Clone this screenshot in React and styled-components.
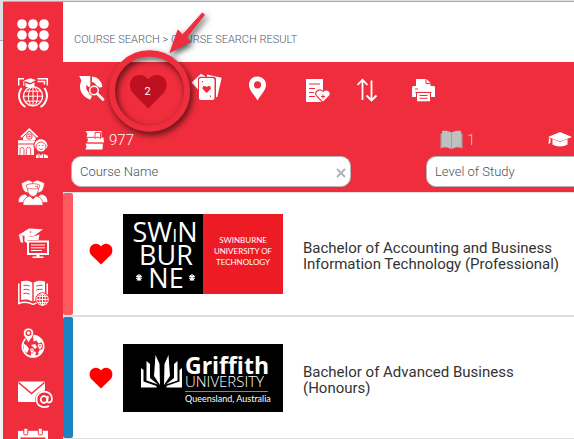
import styled, { createGlobalStyle } from "styled-components";

const RED = "#ef2d3c";

const menuItems = [
  { label: "Universities", icon: GlobeCapIcon },
  { label: "Campus", icon: SchoolIcon },
  { label: "Students", icon: GroupIcon },
  { label: "E-learning", icon: MonitorCapIcon },
  { label: "Course search", icon: BookGlobeIcon },
  { label: "Locations", icon: PinGlobeIcon },
  { label: "Mail", icon: MailIcon },
  { label: "Calendar", icon: CalendarIcon },
];

const courses = [
  {
    name: "Bachelor of Accounting and Business Information Technology (Professional)",
    color: "#ff5a5f",
    logo: SwinburneLogo,
  },
  {
    name: "Bachelor of Advanced Business (Honours)",
    color: "#1b82c4",
    logo: GriffithLogo,
  },
];

const App = () => {
  return (
    <>
      <GlobalStyle />
      <Page>
        <SideBar>
          <MenuToggle aria-label="Menu">
            <DotsIcon />
          </MenuToggle>
          {menuItems.map(({ label, icon: Icon }) => (
            <MenuButton key={label} aria-label={label}>
              <Icon />
            </MenuButton>
          ))}
        </SideBar>
        <Main>
          <Header>COURSE SEARCH &gt; COURSE SEARCH RESULT</Header>
          <SearchPanel>
            <ToolBar>
              <ToolButton aria-label="Search again">
                <SearchAgainIcon />
              </ToolButton>
              <ToolButton aria-label="Favourites">
                <BigHeartIcon />
                <Count>2</Count>
                <Pointer />
              </ToolButton>
              <ToolButton aria-label="Cards">
                <CardsIcon />
              </ToolButton>
              <ToolButton aria-label="Map">
                <PinIcon />
              </ToolButton>
              <ToolButton aria-label="Report">
                <ReportIcon />
              </ToolButton>
              <ToolButton aria-label="Sort">
                <SortIcon />
              </ToolButton>
              <ToolButton aria-label="Print">
                <PrintIcon />
              </ToolButton>
            </ToolBar>
            <Filters>
              <Filter>
                <Stats>
                  <Stat>
                    <BooksIcon />
                    977
                  </Stat>
                </Stats>
                <Field>
                  <Input aria-label="Course Name" placeholder="Course Name" />
                  <ClearButton aria-label="Clear">
                    <svg width="10" height="10" viewBox="0 0 10 10">
                      <path d="M1 1l8 8M9 1L1 9" stroke="#b3b3b3" strokeWidth="2" />
                    </svg>
                  </ClearButton>
                </Field>
              </Filter>
              <Filter>
                <Stats>
                  <Stat $muted>
                    <OpenBookIcon />1
                  </Stat>
                  <Stat>
                    <CapIcon />
                  </Stat>
                </Stats>
                <Field>
                  <Input aria-label="Level of Study" placeholder="Level of Study" />
                </Field>
              </Filter>
            </Filters>
          </SearchPanel>
          <CourseList>
            {courses.map(({ name, color, logo: Logo }) => (
              <CourseRow key={name}>
                <Stripe $color={color} />
                <HeartButton aria-label="Remove from favourites">
                  <HeartIcon />
                </HeartButton>
                <Logo />
                <CourseName>{name}</CourseName>
              </CourseRow>
            ))}
          </CourseList>
        </Main>
      </Page>
    </>
  );
};

// menu icons

function DotsIcon() {
  return (
    <svg width="32" height="32" viewBox="0 0 32 32" fill="#fff">
      {[5, 16, 27].map((y) =>
        [5, 16, 27].map((x) => <circle key={`${x}-${y}`} cx={x} cy={y} r="4.8" />)
      )}
    </svg>
  );
}

function GlobeCapIcon() {
  return (
    <MenuIcon viewBox="0 0 30 30">
      <g fill="none" stroke="#fff" strokeWidth="1">
        <circle cx="15" cy="18.2" r="9.6" strokeWidth="1.4" />
        <ellipse cx="15" cy="18.2" rx="4.6" ry="9.6" />
        <path d="M15 9v19M5.5 18.2h19M7 13.2h16M7 23.2h16" />
        <path d="M7.4 29C.6 24.6-.8 16.4 3.6 10M22.6 29c6.8-4.4 8.2-12.6 3.8-19" strokeWidth="2" />
        <path d="M.7 7.5V.8H6M19.5.8h9.800V7.500M19.500 3.500h7v3" strokeWidth="1.5" />
      </g>
      <path d="M5.500 2.800L12 .2l6 1.800-5.500 3z" fill="#fff" />
      <path d="M7.500 5v3.500c2 1.600 7.500 1.400 9-.7V4.200l-4.300 2.200z" fill="#fff" />
      <path d="M5.800 3v5" stroke="#fff" />
    </MenuIcon>
  );
}

function SchoolIcon() {
  return (
    <MenuIcon viewBox="0 0 30 30">
      <path d="M3 9.200L11.300 1.200l8.300 8" fill="none" stroke="#fff" strokeWidth="1.800" />
      <path d="M5 9.500l6.300-6 6.300 6V12H5z" fill="#fff" />
      <circle cx="11.300" cy="8.500" r="2.800" fill="#fff" stroke={RED} strokeWidth=".9" />
      <path d="M11.300 6.500v4M9.300 8.500h4" stroke={RED} strokeWidth=".6" />
      <path d="M0 12.200h17v3.300H0zM0 16.500h16V27H0z" fill="#fff" />
      <path
        d="M2 27v-5.500a2 2 0 0 1 4 0V27M8.300 27v-5.500a2.200 2.200 0 0 1 4.400 0V27"
        fill="#fff"
        stroke={RED}
        strokeWidth=".8"
      />
      <circle cx="23" cy="17.500" r="7.600" fill={RED} />
      <path d="M16.500 18c0-9 12.500-9 13 0l-1 2.500H17.500z" fill="#fff" />
      <circle cx="23" cy="19" r="5" fill="#fff" stroke={RED} strokeWidth=".8" />
      <path d="M20.500 17.500h1.500M24 17.500h1.500M20.800 20.400c1 1.500 3.400 1.500 4.400 0" fill="none" stroke={RED} strokeWidth=".8" />
      <path d="M18 30v-2.500l3-2 2 2 2-2 5 2.200V30z" fill="#fff" />
      <path d="M21 25v5M25.500 25v5" stroke={RED} strokeWidth=".8" />
    </MenuIcon>
  );
}

function GroupIcon() {
  return (
    <MenuIcon viewBox="0 0 30 30">
      <g fill="#fff" stroke={RED} strokeWidth=".7">
        <path d="M3.500 5l7-3 5 2v7l-5 4c-4-.5-6.500-3-7-10z" />
        <path d="M26.500 5l-7-3-5 2v7l5 4c4-.5 6.500-3 7-10z" />
        <path d="M.2 24.500c0-5 2-7.500 7-8.500l3 3-4 5.500zM29.800 24.500c0-5-2-7.500-7-8.500l-3 3 4 5.500z" />
        <path d="M5 27.300c0-6 3-8.300 7-9.300l3 3 3-3c4 1 7 3.300 7 9.300z" />
        <path d="M8 7.300c4-2.200 10-2.200 14 0l-1.500 3.700c-.3 4-2.500 7.500-5.500 7.500S9.800 15 9.500 11z" />
        <path d="M9.500 11c3-1 5 .5 11-.5M17 8.500l2.500-.5v2" fill="none" />
      </g>
    </MenuIcon>
  );
}

function MonitorCapIcon() {
  return (
    <MenuIcon viewBox="0 0 30 30">
      <rect x="10" y="13.500" width="20" height="12.500" fill={RED} stroke="#fff" strokeWidth="2" />
      <path d="M13 17h14M13 19.800h14M13 22.500h11" stroke="#fff" strokeWidth="1" />
      <path d="M18.500 26h3v2.500h4V30h-11v-1.500h4z" fill="#fff" />
      <path d="M6.500 6.500v7c1 .8 2 1.200 3 1.400V12h11l1-5.500-8 2.500z" fill="#fff" />
      <path d="M0 7.200L11 .4l14 .8-9.800 7.200z" fill="#fff" />
      <path d="M1 7.500h3.500L5 15l-2.500-1z" fill="#fff" />
      <circle cx="12.500" cy="4" r=".8" fill={RED} />
    </MenuIcon>
  );
}

function BookGlobeIcon() {
  return (
    <MenuIcon viewBox="0 0 30 30">
      <path d="M.8 5.500v20c5-2 9.500-1.500 14.200.8 4.700-2.300 9.200-2.800 14.200-.8v-20" fill="none" stroke="#fff" strokeWidth="1.500" />
      <path d="M3 3.500c4-1.200 8-1 11.300 1v19C11 21.300 7 21 3 22zM27 3.500c-4-1.200-8-1-11.300 1v19C19 21.300 23 21 27 22z" fill="#fff" />
      <path
        d="M5.500 7.500c2.300-.4 4.300-.2 6.300.7M5.500 11.500c2.300-.4 4.300-.2 6.300.7M5.500 15.500c2.300-.4 4.300-.2 6.300.7M24.500 7.500c-2.300-.4-4.300-.2-6.300.7M24.500 11.500c-2.300-.4-4.300-.2-6.300.7"
        fill="none"
        stroke={RED}
      />
      <circle cx="24.500" cy="21.500" r="7.200" fill={RED} />
      <g fill="none" stroke="#fff" strokeWidth="1">
        <circle cx="24.500" cy="21.500" r="5.800" />
        <ellipse cx="24.500" cy="21.500" rx="2.800" ry="5.800" />
        <path d="M24.500 15.500v12M18.700 21.500h11.600M20 18.300h9M20 24.700h9" />
      </g>
    </MenuIcon>
  );
}

function PinGlobeIcon() {
  return (
    <MenuIcon viewBox="0 0 30 30">
      <circle cx="15" cy="18.300" r="10.700" fill={RED} stroke="#fff" strokeWidth="1.600" />
      <path d="M5 15l4 3 2 3-2 4-3-2.500zM15 8l7 2 2.500 4-4 1.500-2-3-3 1zM13 17l4-1 2 3-2 2zM13 22l5 2-1 5-4-1zM22 21l3 1-3 5-2-2z" fill="#fff" />
      <path d="M10.500 0c-3 0-5.200 2.200-5.200 5 0 3.500 3 5.500 5.200 10 2.200-4.500 5.200-6.500 5.200-10 0-2.800-2.200-5-5.200-5z" fill="#fff" stroke={RED} strokeWidth=".8" />
      <circle cx="10.500" cy="5" r="2.300" fill="#fff" stroke={RED} strokeWidth="1.300" />
      <path d="M22 15.500c-3.500 0-3 3.500 0 6.500 3-3 3.500-6.500 0-6.500zM14 20c-3 0-2.500 3 0 5.500 2.500-2.500 3-5.500 0-5.500z" fill="#fff" stroke={RED} strokeWidth=".7" />
      <circle cx="22" cy="17.700" r=".8" fill={RED} />
      <circle cx="14" cy="22" r=".7" fill={RED} />
    </MenuIcon>
  );
}

function MailIcon() {
  return (
    <MenuIcon viewBox="0 0 30 30">
      <rect x="0" y="3.500" width="27" height="20.500" rx="1" fill="#fff" />
      <path d="M.5 4.500l13 11 13-11" fill="none" stroke={RED} strokeWidth="1.500" />
      <circle cx="26.500" cy="21.700" r="9.300" fill={RED} />
      <g fill="none" stroke="#fff" strokeWidth="1.700">
        <circle cx="26" cy="21.500" r="3.300" />
        <path d="M30 18l-.8 5c0 2.500 4.800 2 4.800-2.300 0-4.500-3.600-7-7.700-7-4.600 0-7.800 3.300-7.800 7.800 0 6.500 6.500 9.500 12.500 6.500" />
      </g>
    </MenuIcon>
  );
}

function CalendarIcon() {
  return (
    <MenuIcon viewBox="0 0 30 30">
      <path d="M0 2.800h30V30H0z" fill="#fff" />
      <path d="M2.500 9.500h25V28h-25z" fill={RED} />
      <rect x="5.800" y=".3" width="4" height="6.500" rx="1" fill="#fff" stroke={RED} strokeWidth="1" />
      <rect x="20.300" y=".3" width="4" height="6.500" rx="1" fill="#fff" stroke={RED} strokeWidth="1" />
      <path d="M5 12h4v3H5zM13 12h4v3h-4zM21 12h4v3h-4z" fill="#fff" />
    </MenuIcon>
  );
}

// toolbar icons

function SearchAgainIcon() {
  return (
    <ToolIcon viewBox="0 0 39 30">
      <path d="M12 7.500c-3.500 5.500-3 12.500 6.500 16.500" fill="none" stroke="#fff" strokeWidth="6" />
      <path d="M6.300 3h11v12.500L13.500 12 9 9z" fill="#fff" />
      <path d="M19 6.300c4 .3 7 3.200 7.700 8.200" fill="none" stroke="#fff" strokeWidth="5.500" />
      <circle cx="21" cy="17.500" r="5.800" fill={RED} />
      <circle cx="21" cy="17.500" r="4.300" fill={RED} stroke="#fff" strokeWidth="1.500" />
      <path d="M24.300 21l6 6" stroke={RED} strokeWidth="5" />
      <path d="M24.300 20.800l5.700 5.700" stroke="#fff" strokeWidth="2.800" strokeLinecap="round" />
    </ToolIcon>
  );
}

function BigHeartIcon() {
  return (
    <svg width="39" height="36" viewBox="0 0 39 36">
      <path d="M20.200 35.500L5 20C1.500 16.300 1 10 3.600 6 7.500.5 16 .8 20.200 6.300 24.500.8 33 .5 36.900 6c2.600 4 2.100 10.300-1.400 14z" fill="#bd1122" />
    </svg>
  );
}

function CardsIcon() {
  return (
    <ToolIcon viewBox="0 0 39 30">
      <path d="M8.600 9.500L18 .8l8 5-7 15z" fill="#fff" />
      <path d="M24 1.500l14.700 3.300-4.500 19.500-9-1z" fill="#fff" />
      <rect x="15" y="3.800" width="18" height="24" rx="2.500" fill={RED} />
      <rect x="16" y="5" width="15.500" height="22" rx="2" fill="#fff" />
      <path d="M23.700 20l-3.800-3.700c-1.700-2.300 1.700-4.800 3.800-2.300 2.100-2.500 5.500 0 3.800 2.300z" fill={RED} />
      <path d="M19.500 8v1.500M27.500 22.500v1.500" stroke={RED} />
    </ToolIcon>
  );
}

function PinIcon() {
  return (
    <ToolIcon viewBox="0 0 39 30">
      <path
        d="M19.500 3.500c-5 0-8.500 3.600-8.500 8.300 0 5.700 5 9.500 8.500 15.700 3.500-6.200 8.500-10 8.500-15.700 0-4.700-3.500-8.300-8.500-8.300zm0 4.700a3.600 3.600 0 1 1 0 7.200 3.600 3.600 0 0 1 0-7.200z"
        fill="#fff"
        fillRule="evenodd"
      />
    </ToolIcon>
  );
}

function ReportIcon() {
  return (
    <ToolIcon viewBox="0 0 39 30">
      <rect x="13" y="6" width="17" height="23" fill="#fff" />
      <path d="M16 11h11M16 15.500h6M16 19.500h5M16 23.500h6" stroke={RED} strokeWidth="1.200" />
      <path
        d="M30 29.500l-6.500-6.500c-2.800-4 2.800-8.500 6.500-4.500 3.700-4 9.300.5 6.500 4.500z"
        fill="#fff"
        stroke={RED}
        strokeWidth="1.100"
      />
      <path d="M30 21.500v4M28 23.500h4" stroke={RED} strokeWidth="1.100" />
    </ToolIcon>
  );
}

function SortIcon() {
  return (
    <ToolIcon viewBox="0 0 39 30">
      <path d="M14.500 27V7M9.500 12l5-5.200 5 5.200M23.500 7.500v20M18.500 22.500l5 5 5-5" fill="none" stroke="#fff" strokeWidth="1.800" />
    </ToolIcon>
  );
}

function PrintIcon() {
  return (
    <ToolIcon viewBox="0 0 39 30">
      <path d="M13 6h10.500l4 4v3H13z" fill="#fff" />
      <path d="M23 6v4.500h4.500" fill="none" stroke={RED} strokeWidth="1" />
      <path d="M11 13h19.500c1 0 1.500.7 1.500 1.500V24h-4v-4.500H13V24H9v-9.500c0-.8.7-1.500 2-1.500z" fill="#fff" />
      <path d="M12.500 19.500h16" stroke={RED} strokeWidth="1.200" />
      <path d="M12 16h3" stroke={RED} strokeWidth="1" />
      <rect x="14" y="20" width="13" height="8.300" fill="#fff" />
      <path d="M16.500 22.500h8M16.500 25.300h8" stroke={RED} strokeWidth="1" />
    </ToolIcon>
  );
}

function Pointer() {
  return (
    <PointerArt width="120" height="130" viewBox="0 0 120 130">
      <circle cx="49.500" cy="83" r="37.600" fill="none" stroke={RED} strokeWidth="6.200" />
      <path d="M102.300 5l2.200 1.800L86.500 29.500l4 3.800L70 44.500 78 22l4.500 5z" fill={RED} stroke={RED} strokeWidth="1" />
    </PointerArt>
  );
}

// stat icons

function BooksIcon() {
  return (
    <svg width="20" height="20" viewBox="0 0 20 20">
      <path d="M.5 1h16v6H1.500l1-3zM2 7.500h16.500l.5 5H2l1-2.500zM.5 13.500h17.500l-.5 6H.5l1-3z" fill="#fff" />
      <path d="M10 2.500h5.500v6l-2.700-1.500L10 8.500z" fill="#fff" stroke={RED} strokeWidth=".9" />
      <path d="M2 7.300h8M2 13h16" stroke={RED} strokeWidth=".7" />
    </svg>
  );
}

function OpenBookIcon() {
  return (
    <svg width="23" height="20" viewBox="0 0 23 20">
      <path d="M.5 3.500v15c4-1.500 7.500-1 11 .8 3.500-1.800 7-2.300 11-.8v-15" fill="#a9a9a9" />
      <path d="M2 1c3.500-.6 6.500 0 9.500 1.500C14.500 1 17.500.4 21 1v16c-3.500-.6-6.500 0-9.500 1.500C8.500 17 5.500 16.400 2 17z" fill="#bfc0c0" />
      <path d="M11.500 2.500v16" stroke="#a88f92" strokeWidth=".8" />
    </svg>
  );
}

function CapIcon() {
  return (
    <svg width="26" height="20" viewBox="0 0 26 20">
      <path d="M1 7l12-5 12 5-12 4.500z" fill="#fff" />
      <path d="M5.500 9l7.500 3 7.500-3v5.500c-4 2.500-11 2.500-15 0zM2 8l1.500.5v4l-2 2z" fill="#fff" />
    </svg>
  );
}

function HeartIcon() {
  return (
    <svg width="24" height="22" viewBox="0 0 24 22">
      <path d="M12 21.500L2.500 12.300C.3 10 0 6 1.700 3.500 4.300-.2 9.700 0 12 3.500 14.300 0 19.700-.2 22.300 3.500 24 6 23.700 10 21.500 12.300z" fill="#f00" />
    </svg>
  );
}

// university logos

function SwinburneLogo() {
  return (
    <Logo width="160" height="80" viewBox="0 0 160 80">
      <rect width="80" height="80" fill="#000" />
      <rect x="80" width="80" height="80" fill="#ed1c24" />
      <text fill="#fff" fontFamily="'Open Sans', sans-serif" fontSize="27" textAnchor="middle">
        <tspan x="42" y="28">SW</tspan>
        <tspan fontSize="18">I</tspan>
        <tspan>N</tspan>
        <tspan x="43" y="51">BUR</tspan>
        <tspan x="43" y="74">NE</tspan>
      </text>
      <g fill="#fff">
        <path d="M16 60v7M13 62.500l6 2M19 62.500l-6 2M14 66.500l4-5.500M18 66.500l-4-5.500" stroke="#fff" strokeWidth="1.200" />
        <path d="M69 60v7M66 62.500l6 2M72 62.500l-6 2M67 66.500l4-5.500M71 66.500l-4-5.500" stroke="#fff" strokeWidth="1.200" />
      </g>
      <text fill="#fff" fontFamily="Lato, sans-serif" fontSize="8" textAnchor="middle">
        <tspan x="120" y="29">SWINBURNE</tspan>
        <tspan x="120" y="40">UNIVERSITY OF</tspan>
        <tspan x="120" y="51">TECHNOLOGY</tspan>
      </text>
    </Logo>
  );
}

function GriffithLogo() {
  return (
    <Logo width="160" height="68" viewBox="0 0 160 68">
      <rect width="160" height="68" fill="#000" />
      <g fill="#fff">
        <path d="M18 24l2.500 2v11.500l13 4.500v1.500H18z" />
        <path d="M23.500 17l3.500 3v14l8 6.500-11.500-4z" />
        <path d="M32.500 11l4 9 .5 21-6-9z" />
        <path d="M45.500 11l-4 9-.5 21 6-9z" />
        <path d="M54.500 17l-3.500 3v14l-8 6.500 11.500-4z" />
        <path d="M59 24l-2.500 2v11.500l-13 4.500v1.500H59z" />
      </g>
      <text fill="#fff" fontFamily="'Open Sans', sans-serif">
        <tspan x="62" y="30" fontSize="23" fontWeight="700">Griffith</tspan>
        <tspan x="62" y="43" fontSize="15" fontWeight="300">UNIVERSITY</tspan>
        <tspan x="62" y="58" fontSize="9" fontFamily="Lato, sans-serif">Queensland, Australia</tspan>
      </text>
      <path d="M62 47.500h83" stroke="#888" />
    </Logo>
  );
}

const GlobalStyle = createGlobalStyle`
  * {
    box-sizing: border-box;
  }
  body {
    margin: 0;
    font-family: Roboto, sans-serif;
    background: linear-gradient(#dedee3 40px, #ababae 40px 41px, #f3f3f3 41px);
  }
  button {
    border: none;
    padding: 0;
    background: none;
    color: inherit;
    font-family: inherit;
    cursor: pointer;
  }
  svg {
    display: block;
    flex-shrink: 0;
  }
`;

const Page = styled.div`
  height: calc(100vh - 2px);
  margin: 2px 0 0 3px;
  box-shadow: 0 -1px 0 #a9a9ae;
  display: flex;
  overflow: hidden;
`;

const SideBar = styled.nav`
  width: 60px;
  flex-shrink: 0;
  overflow: hidden;
  display: flex;
  flex-direction: column;
  background-color: ${RED};
`;

const MenuButton = styled.button`
  height: 50px;
  flex-shrink: 0;
  display: flex;
  justify-content: center;
  align-items: center;
`;

const MenuToggle = styled(MenuButton)`
  height: 66px;
`;

const MenuIcon = styled.svg`
  width: 30px;
  height: 30px;
  overflow: visible;
`;

const Main = styled.main`
  flex: 1;
  min-width: 0;
  background-color: white;
`;

const Header = styled.header`
  height: 60px;
  padding: 14px 11px 0;
  display: flex;
  align-items: center;
  font-size: 11px;
  font-weight: 300;
  color: #4f5968;
`;

const SearchPanel = styled.section`
  padding: 11px 0 5px;
  background-color: ${RED};
`;

const ToolBar = styled.div`
  display: flex;
  align-items: flex-start;
  padding-left: 2px;
`;

const ToolButton = styled.button`
  position: relative;
  width: 55px;
  height: 36px;
  display: flex;
  justify-content: center;
  align-items: flex-start;
`;

const ToolIcon = styled.svg`
  width: 39px;
  height: 30px;
`;

const Count = styled.span`
  position: absolute;
  inset: 0;
  line-height: 38px;
  font-size: 11px;
  color: white;
`;

const PointerArt = styled.svg`
  position: absolute;
  left: -20px;
  top: -65px;
  z-index: 1;
  pointer-events: none;
  filter: drop-shadow(2px 3px 3px rgba(0, 0, 0, 0.7));
`;

const Filters = styled.div`
  display: grid;
  grid-template-columns: 280px 280px;
  gap: 75px;
  padding: 21px 0 0 8px;
  overflow: hidden;
`;

const Filter = styled.div`
  display: flex;
  flex-direction: column;
  gap: 6px;
`;

const Stats = styled.div`
  display: flex;
  gap: 72px;
  padding-left: 14px;
`;

const Stat = styled.div`
  height: 20px;
  display: flex;
  align-items: center;
  gap: 4px;
  font-size: 15px;
  font-weight: 300;
  color: ${({ $muted }) => ($muted ? "#d5c3c5" : "white")};
`;

const Field = styled.div`
  height: 31px;
  display: flex;
  align-items: center;
  padding: 0 4px 0 8px;
  background-color: white;
  border: 1px solid #b5b5b5;
  border-radius: 10px;
`;

const Input = styled.input`
  flex: 1;
  min-width: 0;
  padding: 0;
  border: none;
  outline: none;
  background: none;
  font-family: inherit;
  font-size: 13px;
  font-weight: 300;
  color: #4a5360;
  &::placeholder {
    color: #4a5360;
    opacity: 1;
  }
`;

const ClearButton = styled.button`
  padding-top: 2px;
`;

const CourseList = styled.ul`
  margin: 0;
  padding: 0;
  list-style: none;
  border-top: 1px solid #dedede;
`;

const CourseRow = styled.li`
  box-sizing: content-box;
  min-height: 121px;
  display: flex;
  align-items: center;
  border-bottom: 2px solid #dedede;
`;

const Stripe = styled.div`
  width: 10px;
  align-self: stretch;
  background-color: ${({ $color }) => $color};
  border-radius: 2px;
`;

const HeartButton = styled.button`
  margin: 0 10px 0 16px;
`;

const Logo = styled.svg`
  margin: 21px 0;
  overflow: visible;
`;

const CourseName = styled.div`
  width: 260px;
  margin-left: 20px;
  padding-top: 4px;
  font-size: 15px;
  line-height: 16px;
  color: #333;
`;

export default App;
